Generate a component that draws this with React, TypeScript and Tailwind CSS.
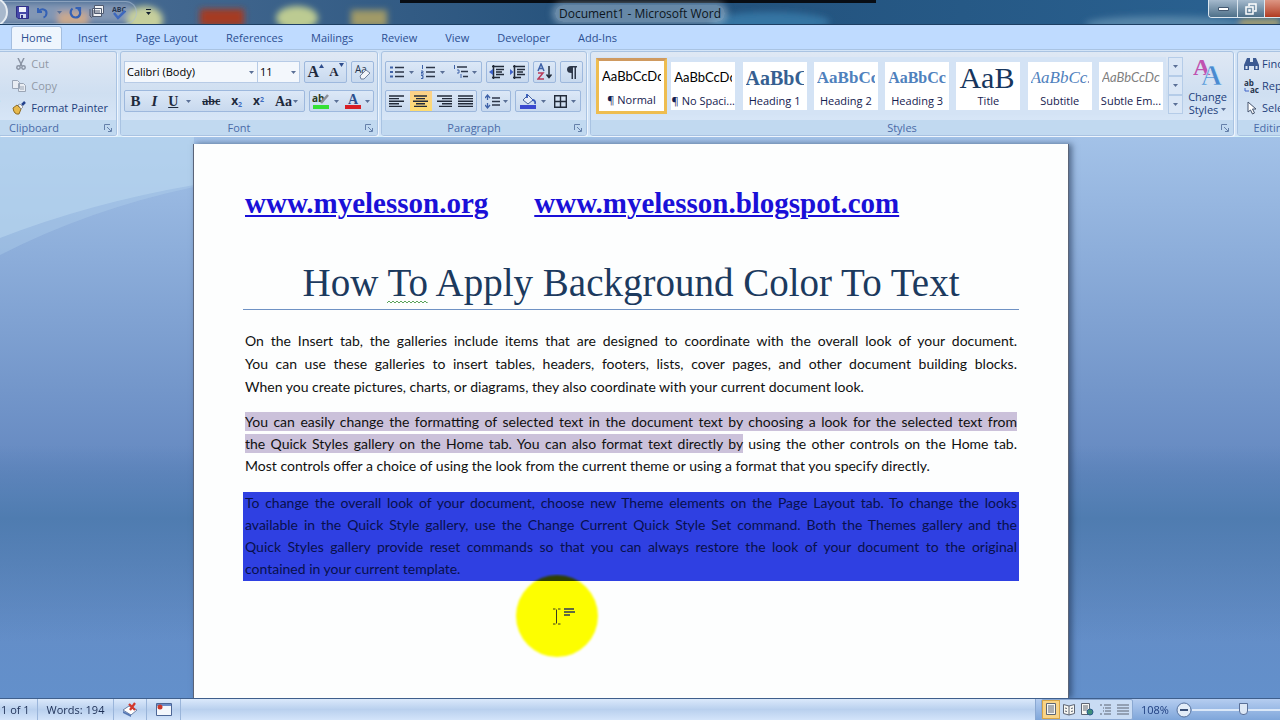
import React from 'react'

const tabs = ['Insert', 'Page Layout', 'References', 'Mailings', 'Review', 'View', 'Developer', 'Add-Ins']

const styleTiles = [
  { name: '¶ Normal', sample: 'AaBbCcDc', look: 'font-[Lato] text-[13px] text-black', selected: true },
  { name: '¶ No Spaci...', sample: 'AaBbCcDc', look: 'font-[Lato] text-[13px] text-black' },
  { name: 'Heading 1', sample: 'AaBbC', look: 'font-[Liberation_Serif] text-[20px] font-bold text-[#365f91]' },
  { name: 'Heading 2', sample: 'AaBbCc', look: 'font-[Liberation_Serif] text-[17px] font-bold text-[#4f81bd]' },
  { name: 'Heading 3', sample: 'AaBbCcI', look: 'font-[Liberation_Serif] text-[16px] font-bold text-[#4f81bd]' },
  { name: 'Title', sample: 'AaB', look: 'font-[Liberation_Serif] text-[30px] leading-8 text-[#17365d]' },
  { name: 'Subtitle', sample: 'AaBbCc.', look: 'font-[Liberation_Serif] text-[17px] italic text-[#4f81bd]' },
  { name: 'Subtle Em...', sample: 'AaBbCcDc', look: 'font-[Lato] text-[13px] italic text-[#808080]' },
]

const Caret: React.FC = () => (
  <svg width="5" height="3" viewBox="0 0 5 3" className="shrink-0">
    <path d="M0 0h5L2.500 3z" fill="#5a6f96" />
  </svg>
)

const Launcher: React.FC = () => (
  <svg width="8" height="8" viewBox="0 0 8 8" fill="none" stroke="#6580aa">
    <path d="M.5 6V.5H6M3 3l4 4M7.500 4v3.500H4" />
  </svg>
)

const Group: React.FC<{ title: string; className: string; launcher?: boolean; children: React.ReactNode }> = ({
  title,
  className,
  launcher = true,
  children,
}) => (
  <section
    aria-label={title}
    className={`flex h-[85px] flex-col overflow-hidden rounded-[3px] border border-[#a9c3e2] bg-linear-to-b from-[#dfe8f4] via-[#cfdff1] to-[#dbe9fa] shadow-[1px_1px_0_#eef5fd] ${className}`}
  >
    <div className="min-h-0 flex-1">{children}</div>
    <div className="flex h-[15px] shrink-0 items-center bg-[#c1d9f0] px-1 text-[11px] leading-[14px] text-[#4a6ba8]">
      <span className="flex-1 pr-3 text-center">{title}</span>
      {launcher && (
        <button aria-label={`${title} options`}>
          <Launcher />
        </button>
      )}
    </div>
  </section>
)

const Bar: React.FC<{ className: string; children: React.ReactNode }> = ({ className, children }) => (
  <div
    className={`flex h-[22px] items-center justify-around rounded-[2px] border border-[#9db8dd] bg-linear-to-b from-[#dce8f7] to-[#c8d9ee] ${className}`}
  >
    {children}
  </div>
)

const Tool: React.FC<{ label: string; caret?: boolean; className?: string; children: React.ReactNode }> = ({
  label,
  caret,
  className = '',
  children,
}) => (
  <button aria-label={label} className={`flex h-5 items-center gap-1 text-[#1f2a3c] ${className}`}>
    {children}
    {caret && <Caret />}
  </button>
)

const Lines: React.FC<{ rows: number[][] }> = ({ rows }) => (
  <svg width="15" height="13" viewBox="0 0 15 13" stroke="#222b3a" strokeWidth="1.400">
    {rows.map(([x1, x2], i) => (
      <path key={i} d={`M${x1} ${1 + i * 2.6}H${x2}`} />
    ))}
  </svg>
)

const TitleBar: React.FC = () => (
  <header className="relative flex h-[25px] shrink-0 items-center overflow-hidden border-b border-[#1d3f63] bg-linear-to-r from-[#4d6f96] via-[#22507a] to-[#2a6292]">
    {/* desktop icons seen through the glass */}
    <svg className="absolute inset-0 h-full w-full" aria-hidden="true">
      <defs>
        <filter id="glass" x="-30%" y="-30%" width="160%" height="160%">
          <feGaussianBlur stdDeviation="3" />
        </filter>
      </defs>
      <g filter="url(#glass)">
        <rect x="0" y="3" width="132" height="20" fill="#8296b4" />
        <rect x="58" y="12" width="30" height="14" fill="#c9a98e" />
        <ellipse cx="145" cy="20" rx="18" ry="14" fill="#c6cf9c" />
        <rect x="200" y="9" width="44" height="17" fill="#a53a22" />
        <ellipse cx="297" cy="18" rx="21" ry="12" fill="#bccb92" />
        <rect x="351" y="10" width="36" height="17" fill="#a09a68" />
        <ellipse cx="770" cy="22" rx="60" ry="10" fill="#3474a3" />
        <ellipse cx="1165" cy="24" rx="80" ry="8" fill="#5584a8" />
        <rect x="1240" y="19" width="40" height="8" fill="#b3a671" />
      </g>
      <path d="M400 0h476v3H400z" fill="#080d14" />
    </svg>
    <div className="relative flex h-[23px] w-[137px] items-center gap-[7px] rounded-r-full border border-l-0 border-[#a9bcd3]/60 pl-4">
      <svg className="absolute -left-[17px] -top-1 h-8 w-[26px]" viewBox="0 0 26 32">
        <circle cx="10" cy="14" r="14" fill="#a8b8cc" stroke="#e6ecf2" strokeWidth="2" />
      </svg>
      <button aria-label="Save">
        <svg width="13" height="13" viewBox="0 0 13 13">
          <path d="M.5.5h12v12H2L.5 11z" fill="#4648a8" stroke="#2f2f88" />
          <path d="M3 1h7v5H3z" fill="#f1f3fb" />
          <path d="M4 8h6v4H4z" fill="#d4daf0" />
          <path d="M5 9h2v3H5z" fill="#33358c" />
        </svg>
      </button>
      <button aria-label="Undo" className="flex items-center gap-2">
        <svg width="13" height="13" viewBox="0 0 13 13" fill="none" stroke="#3461b5" strokeWidth="2">
          <path d="M2 2v4h4M2.500 5.500C5 2 11 3 10.500 7.500 10.300 9.500 9 11 7.500 11.500" />
        </svg>
        <Caret />
      </button>
      <button aria-label="Repeat">
        <svg width="13" height="13" viewBox="0 0 13 13" fill="none" stroke="#3461b5" strokeWidth="2.200">
          <path d="M3.500 2.500C0 5.500 2 11.500 6.500 11.500S13 6 9 2.500M6.500 2H11v4" />
        </svg>
      </button>
      <button aria-label="Attach">
        <svg width="16" height="14" viewBox="0 0 16 14" fill="#f2f4f7" stroke="#505b70">
          <path d="M5.500.500h9v8h-9zM3.500 3.500h9v8h-9z" />
          <path d="M1 4v7q1.500 3 3 0V5M6 6h5M6 8h5" fill="none" />
        </svg>
      </button>
      <button aria-label="Spelling">
        <svg width="15" height="15" viewBox="0 0 15 15" fill="none">
          <text x="0" y="7" fontSize="7" fontWeight="bold" fontFamily="Open Sans" fill="#263550">ABC</text>
          <path d="M2 8l4 5 7-7" stroke="#3e68bd" strokeWidth="2.500" />
        </svg>
      </button>
    </div>
    <button aria-label="Customize toolbar" className="relative ml-2 flex flex-col items-center gap-px">
      <svg width="7" height="6" viewBox="0 0 7 6"><path d="M1 0h5v1H1zM1 3h5L3.500 6z" fill="#14202f" /></svg>
    </button>
    <h1 className="absolute inset-x-0 top-0 text-center text-[12px] leading-[27px] text-[#0c1520]">
      <span className="rounded-full bg-[#a9c0d3]/50 px-1 shadow-[0_0_6px_3px_rgba(169,192,211,0.5)]">
        Document1 - Microsoft Word
      </span>
    </h1>
    <div className="relative ml-auto flex h-[18px] w-[72px] shrink-0 self-start overflow-hidden rounded-bl-[4px] border border-r-0 border-t-0 border-[#dbe6ef]">
      <button aria-label="Minimize" className="flex w-7 shrink-0 items-center justify-center bg-linear-to-b from-[#a5bacd] to-[#4e7089]">
        <svg width="11" height="4" viewBox="0 0 11 4"><path d="M.5.500h10v3H.5z" fill="#fff" stroke="#435870" /></svg>
      </button>
      <button aria-label="Restore" className="flex w-[27px] shrink-0 items-center justify-center border-l border-[#dbe6ef] bg-linear-to-b from-[#a5bacd] to-[#4e7089]">
        <svg width="12" height="12" viewBox="0 0 12 12" fill="none" stroke="#fff" strokeWidth="1.500">
          <path d="M4 3V1h7v7H9M1 4h7v7H1z" />
          <path d="M4 7h1v1H4z" />
        </svg>
      </button>
      <button aria-label="Close" className="w-10 shrink-0 border-l border-[#dbe6ef] bg-linear-to-b from-[#dd9684] to-[#b03a20]" />
    </div>
  </header>
)

const Clipboard: React.FC = () => (
  <Group title="Clipboard" className="w-[117px] shrink-0 rounded-l-none border-l-0 [&>div:last-child>span]:pr-10">
    <div className="flex h-full justify-end pr-2 pt-px">
      <button className="flex w-10 shrink-0 flex-col items-end justify-between pb-3 pt-1 text-[11px] leading-[14px] text-[#1e3f7c]">
        <svg width="24" height="28" viewBox="0 0 24 28">
          <rect x="1" y="1" width="22" height="24" rx="2" fill="#dfc78f" stroke="#a98c4c" />
          <path d="M9.500 10.500h14v16h-14z" fill="#fff" stroke="#5c77a8" />
        </svg>
        Paste
      </button>
      <div className="ml-3 flex shrink-0 flex-col text-[11px] leading-[22px]">
        <button disabled className="flex items-center gap-[5px] pl-[4px] text-[#9199a6]">
          <svg width="10" height="12" viewBox="0 0 10 12" fill="none" stroke="#8a94a4" strokeWidth="1.500">
            <path d="M2 0l4 8M8 0L4 8" />
            <circle cx="2.500" cy="9.500" r="1.700" />
            <circle cx="7.500" cy="9.500" r="1.700" />
          </svg>
          Cut
        </button>
        <button disabled className="flex items-center gap-[5px] text-[#9199a6]">
          <svg width="14" height="12" viewBox="0 0 14 12" fill="#e9edf3" stroke="#9aa5b5">
            <path d="M.5.500h5l2 2v6h-7zM6.500 3.500h5l2 2v6h-7z" />
            <path d="M8 7h4M8 9h4" />
          </svg>
          Copy
        </button>
        <button className="flex items-center gap-[5px] text-[#1e3f7c]">
          <svg width="14" height="14" viewBox="0 0 14 14">
            <path d="M1 7l4-3 4 4-2 5q-5 1-6-6z" fill="#e7b94c" stroke="#8c6a24" />
            <path d="M6 4l3 4 2-2-3-3z" fill="#f6f6f6" stroke="#6c6c6c" strokeWidth=".6" />
            <path d="M10 4l3-3" stroke="#23418c" strokeWidth="2.500" />
          </svg>
          Format Painter
        </button>
      </div>
    </div>
  </Group>
)

const FontGroup: React.FC = () => (
  <Group title="Font" className="w-[258px] shrink-0">
    <div className="flex flex-col gap-[7px] px-[3px] pt-[9px]">
      <div className="flex gap-1">
        <div className="flex">
          <label className="relative flex items-center">
            <select aria-label="Font name" className="h-[22px] w-[134px] appearance-none border border-[#b7cbe6] bg-[#f3f7fc] pl-[2px] text-[11px] text-black">
              <option>Calibri (Body)</option>
            </select>
            <span className="pointer-events-none absolute right-1"><Caret /></span>
          </label>
          <label className="relative flex items-center">
            <select aria-label="Font size" className="h-[22px] w-[42px] appearance-none border border-l-0 border-[#b7cbe6] bg-[#f3f7fc] pl-[2px] text-[11px] text-black">
              <option>11</option>
            </select>
            <span className="pointer-events-none absolute right-1"><Caret /></span>
          </label>
        </div>
        <Bar className="w-[44px]">
          <Tool label="Grow font" className="font-[Liberation_Serif] text-[16px] font-bold">
            <span className="flex">A<svg width="5" height="4" viewBox="0 0 5 4" className="mt-1"><path d="M0 4h5L2.500 0z" fill="#2f4d8c" /></svg></span>
          </Tool>
          <Tool label="Shrink font" className="font-[Liberation_Serif] text-[13px] font-bold">
            <span className="flex">A<svg width="5" height="4" viewBox="0 0 5 4" className="mt-px"><path d="M0 0h5L2.500 4z" fill="#2f4d8c" /></svg></span>
          </Tool>
        </Bar>
        <Bar className="w-[23px]">
          <Tool label="Clear formatting">
            <svg width="18" height="17" viewBox="0 0 18 17">
              <text x="1" y="9" fontSize="10" fontFamily="Open Sans" fill="#26344c">Aa</text>
              <path d="M6 12l6-6 4 3-6 6H7z" fill="#f3f5f9" stroke="#70809c" />
            </svg>
          </Tool>
        </Bar>
      </div>
      <div className="flex gap-1">
        <Bar className="w-[182px] font-[Liberation_Serif]">
          <Tool label="Bold" className="text-[15px] font-bold">B</Tool>
          <Tool label="Italic" className="text-[15px] font-bold italic">I</Tool>
          <Tool label="Underline" caret className="text-[14px] font-bold [&>svg]:ml-1"><u>U</u></Tool>
          <Tool label="Strikethrough" className="text-[12px] font-bold"><s>abc</s></Tool>
          <Tool label="Subscript" className="text-[12px] font-bold">
            <span className="font-[Open_Sans]">x<sub className="text-[7px] text-[#3f6cc0]">2</sub></span>
          </Tool>
          <Tool label="Superscript" className="text-[12px] font-bold">
            <span className="font-[Open_Sans]">x<sup className="text-[7px] text-[#3f6cc0]">2</sup></span>
          </Tool>
          <Tool label="Change case" caret className="gap-px text-[14px] font-bold">Aa</Tool>
        </Bar>
        <Bar className="w-[66px]">
          <Tool label="Highlight" caret>
            <svg width="18" height="17" viewBox="0 0 18 17">
              <text x="0" y="9" fontSize="10" fontWeight="bold" fontFamily="Open Sans" fill="#2c3c24">ab</text>
              <path d="M9 10l7-8" stroke="#8a8f98" strokeWidth="2.500" />
              <path d="M1 12h16v4H1z" fill="#35e035" />
            </svg>
          </Tool>
          <Tool label="Font color" caret>
            <svg width="16" height="17" viewBox="0 0 16 17">
              <text x="3" y="11" fontSize="14" fontWeight="bold" fontFamily="Liberation Serif" fill="#2c4f8e">A</text>
              <path d="M0 12h16v4H0z" fill="#d81f26" />
            </svg>
          </Tool>
        </Bar>
      </div>
    </div>
  </Group>
)

const BulletIcon: React.FC<{ kind: 'dots' | 'numbers' | 'levels' }> = ({ kind }) => (
  <svg width="15" height="14" viewBox="0 0 15 14" fill="none">
    {kind === 'dots' && <path d="M0 1.500h3v2H0zM0 6h3v2H0zM0 10.500h3v2H0z" fill="#3f62a8" />}
    {kind === 'numbers' && <path d="M1.500 0v4M0 6h2v1.500H0V9h3M0 10.500h2v3H0M1 12h1" stroke="#3f62a8" />}
    {kind === 'levels' && <path d="M1.500 0v4M4 5h2v3H4M8 9v4" stroke="#3f62a8" />}
    {kind === 'levels' ? (
      <path d="M4 2h10M8 6.500h7M10 11.500h5" stroke="#2c3648" strokeWidth="1.400" />
    ) : (
      <path d="M5 2.500h9M5 7h9M5 11.500h9" stroke="#2c3648" strokeWidth="1.400" />
    )}
  </svg>
)

const IndentIcon: React.FC<{ flip?: boolean }> = ({ flip }) => (
  <svg width="16" height="14" viewBox="0 0 16 14" fill="none" stroke="#222b3a" strokeWidth="1.500">
    <path d="M3 1.500h12M7 4.500h8M7 7h6M7 9.500h8M3 12.500h8M4.500 0v14" />
    <path d={flip ? 'M0 4l3.500 3L0 10z' : 'M4 4L0 7l4 3z'} fill="#3f62c8" stroke="none" />
  </svg>
)

const Paragraph: React.FC = () => (
  <Group title="Paragraph" className="w-[206px] shrink-0">
    <div className="flex flex-col gap-[7px] px-[3px] pt-[9px]">
      <div className="flex gap-1">
        <Bar className="w-[98px]">
          <Tool label="Bullets" caret><BulletIcon kind="dots" /></Tool>
          <Tool label="Numbering" caret><BulletIcon kind="numbers" /></Tool>
          <Tool label="Multilevel list" caret><BulletIcon kind="levels" /></Tool>
        </Bar>
        <Bar className="w-[44px]">
          <Tool label="Decrease indent"><IndentIcon /></Tool>
          <Tool label="Increase indent"><IndentIcon flip /></Tool>
        </Bar>
        <Bar className="w-[23px]">
          <Tool label="Sort">
            <svg width="16" height="18" viewBox="0 0 16 18" fill="none" strokeWidth="1.500">
              <path d="M1 8l3-7 3 7M2 5.500h4" stroke="#3f62a8" />
              <path d="M1 10h5l-5 6h6" stroke="#b83a5a" />
              <path d="M12 3v11M9.500 11.500l2.500 3 2.500-3" stroke="#222b3a" />
            </svg>
          </Tool>
        </Bar>
        <Bar className="w-[23px]">
          <Tool label="Show marks">
            <svg width="10" height="13" viewBox="0 0 10 13">
              <path d="M4 0h6v1.500H9V13H7.500V1.500H6V13H4.500V7Q0 7 0 3.500 0 0 4 0z" fill="#2c3648" />
            </svg>
          </Tool>
        </Bar>
      </div>
      <div className="flex gap-1">
        <Bar className="w-[92px]">
          <Tool label="Align left"><Lines rows={[[0, 15], [0, 10], [0, 15], [0, 10], [0, 13]]} /></Tool>
          <Tool label="Center" className="w-[22px] justify-center bg-linear-to-b from-[#fbd08a] to-[#fddc70]">
            <Lines rows={[[1, 14], [3, 12], [0, 15], [3, 12], [1, 14]]} />
          </Tool>
          <Tool label="Align right"><Lines rows={[[0, 15], [5, 15], [0, 15], [5, 15], [2, 15]]} /></Tool>
          <Tool label="Justify"><Lines rows={[[0, 15], [0, 15], [0, 15], [0, 15], [0, 15]]} /></Tool>
        </Bar>
        <Bar className="w-[30px]">
          <Tool label="Line spacing" caret className="gap-[2px]">
            <svg width="16" height="15" viewBox="0 0 16 15" fill="none">
              <path d="M2.500 2v4M2.500 9v4M0 4l2.500-3L5 4M0 11l2.500 3L5 11" stroke="#3f62a8" strokeWidth="1.300" />
              <path d="M7 4h8M7 7.500h8M7 11h8" stroke="#2c3648" strokeWidth="1.500" />
            </svg>
          </Tool>
        </Bar>
        <Bar className="w-[66px]">
          <Tool label="Shading" caret>
            <svg width="17" height="17" viewBox="0 0 17 17">
              <path d="M3 7l5-5 5 5-5 4z" fill="#e8eefa" stroke="#46639c" />
              <path d="M7 5V1M12 7q4 0 3 4" fill="none" stroke="#3559b8" strokeWidth="1.800" />
              <path d="M0 12h16v4H0z" fill="#3a49d0" />
            </svg>
          </Tool>
          <Tool label="Borders" caret>
            <svg width="13" height="13" viewBox="0 0 13 13" fill="none" stroke="#222b3a" strokeWidth="1.400">
              <path d="M.7.700h11.600v11.600H.7zM6.500.700v11.600M.7 6.500h11.600" />
            </svg>
          </Tool>
        </Bar>
      </div>
    </div>
  </Group>
)

const Styles: React.FC = () => (
  <Group title="Styles" className="min-w-[644px] flex-1">
    <div className="flex pl-[5px] pt-[5px]">
      <div className="flex h-[58px] flex-1 items-center justify-between bg-[#d4e3f5]">
        {styleTiles.map((tile, i) => (
          <button
            key={i}
            className={`flex flex-col items-center overflow-hidden border-[3px] bg-white bg-clip-padding ${
              tile.selected ? 'h-[56px] w-[71px] border-[#eebd50] border-t-[#cf9a60]' : 'h-[54px] w-[70px] border-transparent'
            }`}
          >
            <span className={`flex h-[32px] w-full items-center overflow-hidden whitespace-nowrap px-[3px] ${tile.look}`}>
              <span className="overflow-hidden">{tile.sample}</span>
            </span>
            <span className="whitespace-nowrap text-[11px] leading-[13px] text-[#15214f]">{tile.name}</span>
          </button>
        ))}
      </div>
      <div className="ml-[2px] flex w-[15px] flex-col">
        {['Row up', 'Row down', 'More styles'].map((label) => (
          <button key={label} aria-label={label} className="flex h-[19px] items-center justify-center border border-[#b5cce8] bg-[#dbe7f6]">
            <Caret />
          </button>
        ))}
      </div>
      <button className="flex w-[50px] flex-col items-center pr-px text-[11px] leading-[13px] text-[#1e3f7c]">
        <svg width="30" height="30" viewBox="0 0 30 30" fontFamily="Liberation Serif" fontWeight="bold">
          <text x="0" y="18" fontSize="24" fill="#c052b0">A</text>
          <text x="8" y="28" fontSize="29" fill="#4a8ad0" stroke="#dcebfa" strokeWidth=".6">A</text>
        </svg>
        <span className="mt-[3px]">Change</span>
        <span className="flex items-center gap-[3px]">Styles <Caret /></span>
      </button>
    </div>
  </Group>
)

const Editing: React.FC = () => (
  <div className="w-[44px] shrink-0 overflow-hidden">
    <Group title="Editing" launcher={false} className="w-[80px]">
      <div className="flex flex-col px-[6px] pt-px text-[11px] leading-[22px] text-[#1e3f7c]">
        <button className="flex items-center gap-[3px]">
          <svg width="15" height="14" viewBox="0 0 15 14" fill="#3c5a92">
            <path d="M3 1h3v4h3V1h3l3 7v5h-5V9H5v4H0V8z" />
            <path d="M1.500 9h2v3h-2zM11.500 9h2v3h-2z" fill="#dce7f5" />
          </svg>
          Find
        </button>
        <button className="flex items-center gap-[3px]">
          <svg width="15" height="15" viewBox="0 0 15 15" fontFamily="Open Sans" fontWeight="bold" fontSize="8" fill="#26344c">
            <text x="0" y="7">ab</text>
            <text x="6" y="14">ac</text>
            <path d="M1 9v3h4" fill="none" stroke="#3f62c8" />
          </svg>
          Replace
        </button>
        <button className="flex items-center gap-[3px]">
          <svg width="15" height="14" viewBox="0 0 15 14">
            <path d="M4 1v10l2.500-2 2 4 2-1-2-4H12z" fill="#fff" stroke="#46546e" />
          </svg>
          Select
        </button>
      </div>
    </Group>
  </div>
)

const JustifiedLine: React.FC<{ children: React.ReactNode; last?: boolean }> = ({ children, last }) => (
  <span className={last ? 'block whitespace-nowrap' : 'block whitespace-nowrap [text-align-last:justify]'}>{children}</span>
)

const Mark: React.FC<{ children: React.ReactNode }> = ({ children }) => (
  <mark className="bg-[#cbc1da] py-px text-inherit">{children}</mark>
)

const DocumentPage: React.FC = () => (
  <article className="relative mx-auto w-[876px] shrink-0 border-x border-[#5a6478] bg-[#fdfefe] px-[49px] pt-[41px] shadow-[3px_0_6px_rgba(30,50,80,0.6)]">
    <p className="flex gap-[46px] px-[2px] font-[Liberation_Serif] text-[29px] font-bold leading-9">
      <a href="#org" className="text-[#1a10d8] underline decoration-2 underline-offset-2">www.myelesson.org</a>
      <a href="#blog" className="text-[#1a10d8] underline decoration-2 underline-offset-2">www.myelesson.blogspot.com</a>
    </p>
    <h2 className="mt-9 whitespace-nowrap border-b border-[#6f92c4] text-center font-[Liberation_Serif] text-[39px] leading-[52px] text-[#1c3a5e]">
      How{' '}
      <span className="relative">
        To
        <svg className="absolute inset-x-0 bottom-0 h-1 w-full" aria-hidden="true">
          <defs>
            <pattern id="squiggle" width="4" height="4" patternUnits="userSpaceOnUse">
              <path d="M0 3l2-2 2 2" fill="none" stroke="#5aa35a" />
            </pattern>
          </defs>
          <rect width="100%" height="4" fill="url(#squiggle)" />
        </svg>
      </span>{' '}
      Apply Background Color To Text
    </h2>
    <div className="mt-[19px] font-[Lato] text-[14px] leading-[23px] text-[#101010]">
      <p className="px-[2px]">
        <JustifiedLine>On the Insert tab, the galleries include items that are designed to coordinate with the overall look of your document.</JustifiedLine>
        <JustifiedLine>You can use these galleries to insert tables, headers, footers, lists, cover pages, and other document building blocks.</JustifiedLine>
        <JustifiedLine last>When you create pictures, charts, or diagrams, they also coordinate with your current document look.</JustifiedLine>
      </p>
      <p className="mt-[13px] px-[2px] leading-[22px]">
        <JustifiedLine>
          <Mark>You can easily change the formatting of selected text in the document text by choosing a look for the selected text from</Mark>
        </JustifiedLine>
        <JustifiedLine>
          <Mark>the Quick Styles gallery on the Home tab. You can also format text directly by</Mark> using the other controls on the Home tab.
        </JustifiedLine>
        <JustifiedLine last>Most controls offer a choice of using the look from the current theme or using a format that you specify directly.</JustifiedLine>
      </p>
      <p className="mt-[15px] bg-[#2f40e2] px-[2px] pb-px leading-[22px] text-[#08104c]">
        <JustifiedLine>To change the overall look of your document, choose new Theme elements on the Page Layout tab. To change the looks</JustifiedLine>
        <JustifiedLine>available in the Quick Style gallery, use the Change Current Quick Style Set command. Both the Themes gallery and the</JustifiedLine>
        <JustifiedLine>Quick Styles gallery provide reset commands so that you can always restore the look of your document to the original</JustifiedLine>
        <JustifiedLine last>contained in your current template.</JustifiedLine>
      </p>
    </div>
    {/* pointer highlight */}
    <svg className="pointer-events-none absolute left-[320px] top-[430px] mix-blend-multiply" width="86" height="86" viewBox="0 0 86 86">
      <defs>
        <filter id="soft"><feGaussianBlur stdDeviation="1" /></filter>
      </defs>
      <circle cx="43" cy="42" r="41" fill="#ffff00" filter="url(#soft)" />
      <path d="M39 35h2.500M44 35h2.500M39 50h2.500M44 50h2.500M42.500 35.500v14" stroke="#3a3a20" fill="none" />
      <path d="M50 35h10M50 38h11M50 41h6" stroke="#2e3a58" strokeWidth="1.500" />
    </svg>
  </article>
)

const viewButtons = [
  { label: 'Print layout', d: 'M2.500.500h9v11h-9zM4 3h6M4 5h6M4 7h6M4 9h6' },
  { label: 'Reading', d: 'M1.500 1.500L7 3l5.500-1.500v9L7 12l-5.500-1.500zM7 3v9M3 5l2 .500M9 5.500l2-.500M3 8l2 .500M9 8.500l2-.500' },
  { label: 'Web layout', d: 'M1.500.500h8v11h-8zM3 3h5M3 5h5M3 7h4' },
  { label: 'Outline', d: 'M2 2h2M6 2h7M5 5h1M7 5h6M5 8h1M7 8h6M2 11h2M6 11h7' },
  { label: 'Draft', d: 'M1 2h12M1 5h12M1 8h12M1 11h12' },
]

const StatusBar: React.FC = () => (
  <footer className="flex h-[22px] shrink-0 items-stretch justify-between overflow-hidden border-t border-[#3f5f8c] bg-linear-to-b from-[#dbe9fb] via-[#b9d0ee] to-[#d3e4fa] text-[11px] leading-[21px] text-[#1d2f55]">
    <div className="flex items-stretch [&>*]:border-r [&>*]:border-[#9ab5da]">
      <span className="w-[38px] pl-px">1 of 1</span>
      <span className="w-[76px] text-center">Words: 194</span>
      <button aria-label="Proofing" className="flex w-[33px] items-center justify-center">
        <svg width="17" height="15" viewBox="0 0 17 15">
          <path d="M1 8l6-4 8 4-6 5z" fill="#fff" stroke="#6b7fa3" />
          <path d="M1 9v2l8 4v-2z" fill="#5577b3" />
          <path d="M7 2l6 6M13 1L8 8" stroke="#d2382c" strokeWidth="2.200" />
        </svg>
      </button>
      <button aria-label="Macro recording" className="flex w-[34px] items-center justify-center">
        <svg width="16" height="13" viewBox="0 0 16 13">
          <path d="M.5.500h15v12H.5z" fill="#f4f7fc" stroke="#4c6696" />
          <path d="M1 1h14v2H1z" fill="#6c8dc8" />
          <circle cx="4" cy="4" r="2.500" fill="#c9392c" />
        </svg>
      </button>
    </div>
    <div className="flex w-[245px] shrink-0 items-center overflow-hidden border-l border-[#8aa8d2] bg-linear-to-b from-[#b5cdf0] to-[#7fa6da] pl-[5px]">
      <div className="flex shrink-0 rounded-[2px] border border-[#8aa8d2] bg-[#c9dcf4]">
        {viewButtons.map(({ label, d }, i) => (
          <button key={label} aria-label={label} className={`flex h-[19px] w-[18px] items-center justify-center ${i === 0 ? 'bg-[#f8d488] shadow-[inset_0_0_0_1px_#d8a648]' : ''}`}>
            <svg width="14" height="13" viewBox="0 0 14 13" fill={i < 3 ? '#f7f7f2' : 'none'} stroke="#5d6573">
              <path d={d} />
              {i === 2 && <circle cx="10" cy="9" r="3" fill="#3f8e7a" stroke="#2b5d8c" />}
            </svg>
          </button>
        ))}
      </div>
      <span className="ml-2 w-[28px] shrink-0 text-[#1f3f80]">108%</span>
      <button aria-label="Zoom out" className="ml-[7px] shrink-0">
        <svg width="16" height="16" viewBox="0 0 16 16">
          <circle cx="8" cy="8" r="7" fill="#e2ecf8" stroke="#55709c" />
          <path d="M4 8h8" stroke="#3a5078" strokeWidth="2" />
        </svg>
      </button>
      <label className="flex shrink-0 items-center">
        <input
          type="range"
          aria-label="Zoom"
          defaultValue={50}
          className="h-4 w-[102px] appearance-none bg-transparent [&::-webkit-slider-runnable-track]:h-[2px] [&::-webkit-slider-runnable-track]:bg-[#dbe8f8] [&::-webkit-slider-thumb]:-mt-[6px] [&::-webkit-slider-thumb]:h-3 [&::-webkit-slider-thumb]:w-[9px] [&::-webkit-slider-thumb]:appearance-none [&::-webkit-slider-thumb]:rounded-b-[4px] [&::-webkit-slider-thumb]:border [&::-webkit-slider-thumb]:border-[#5a7098] [&::-webkit-slider-thumb]:bg-[#dde8f6]"
        />
      </label>
    </div>
  </footer>
)

export default function App() {
  return (
    <div className="flex h-screen flex-col overflow-hidden font-['Open_Sans',sans-serif]">
      <TitleBar />
      <nav className="flex h-6 shrink-0 items-end bg-[#bfdbff] pl-[11px] text-[11px] leading-[22px] text-[#2c4f92]">
        <button className="mr-[2px] w-[51px] rounded-t-[3px] border border-b-0 border-[#a4bedf] bg-[#eef5fd]">Home</button>
        {tabs.map((tab) => (
          <button key={tab} className="whitespace-nowrap px-[14px]">{tab}</button>
        ))}
      </nav>
      <div className="flex h-[88px] shrink-0 gap-[3px] border-b border-[#d7f1fa] bg-[#d3e4f7] pt-[2px] [box-shadow:inset_0_1px_0_#a9c3e2]">
        <Clipboard />
        <FontGroup />
        <Paragraph />
        <Styles />
        <Editing />
      </div>
      <main className="relative flex min-h-0 flex-1 overflow-hidden bg-linear-to-b from-[#a3c2e8] from-0% via-[#6488c0] via-60% to-[#6390cb] to-100% pr-[18px] pt-[7px]">
        <div className="absolute inset-0 bg-linear-to-b from-transparent from-55% via-[#4f7cb0] via-68% to-transparent to-90%" />
        <svg className="absolute left-0 top-0 h-[130px] w-[194px]" viewBox="0 0 194 130" preserveAspectRatio="none" aria-hidden="true">
          <path d="M0 0h194v50Q90 72 0 118z" fill="#b5d3ee" opacity=".35" />
          <path d="M0 0h194v48Q90 66 0 101z" fill="#bcd8f0" opacity=".55" />
        </svg>
        <DocumentPage />
      </main>
      <StatusBar />
    </div>
  )
}
